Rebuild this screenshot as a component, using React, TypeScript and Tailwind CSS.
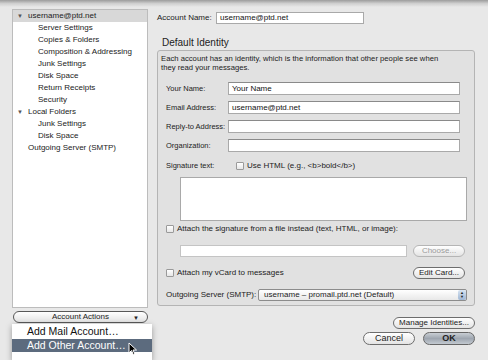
import React from 'react'

const font = { fontFamily: '"Liberation Sans", Arial, sans-serif' }

function TreeRow({ label, level, open, selected }: { label: string; level: number; open?: boolean; selected?: boolean }) {
  return (
    <div className={`flex h-[12px] items-center whitespace-nowrap text-[8px] leading-none text-[#222] ${selected ? 'bg-[#d8d8d8]' : ''}`}>
      <span className="w-[15px] shrink-0 pl-[4px] text-[6px] text-[#555]">{open ? '▼' : ''}</span>
      <span className={level === 1 ? 'pl-[10px]' : ''}>{label}</span>
    </div>
  )
}

function Field({ label, value }: { label: string; value?: string }) {
  return (
    <div className="flex h-[13px] items-center">
      <span className="w-[70px] shrink-0 whitespace-nowrap pl-[8px] text-[7.5px] text-[#222]">{label}</span>
      <div className="flex h-[13px] w-[232px] items-center border border-[#a9a9a9] border-t-[#8a8a8a] bg-white pl-[3px] text-[8px] text-[#111]">
        {value}
      </div>
    </div>
  )
}

function Check() {
  return <span className="inline-block h-[8px] w-[8px] shrink-0 rounded-[1px] border border-[#9a9a9a] bg-gradient-to-b from-white to-[#e6e6e6]" />
}

function Pill({ children, className = '' }: { children: React.ReactNode; className?: string }) {
  return (
    <div className={`flex items-center justify-center whitespace-nowrap rounded-full border border-[#6d6d6d] bg-gradient-to-b from-white to-[#e4e4e4] text-[8px] text-[#222] ${className}`}>
      {children}
    </div>
  )
}

export default function App() {
  return (
    <div className="relative h-[360px] w-[488px] overflow-hidden bg-[#e8e8e8]" style={font}>
      <div className="h-[7px] bg-gradient-to-b from-[#9c9c9c] via-[#cfcfcf] to-[#e8e8e8]" />
      <div className="flex">
        {/* left column */}
        <div className="w-[157px] shrink-0 pl-[12px] pt-[2px]">
          <div className="h-[299px] w-[136px] border border-[#bcbcbc] bg-white">
            <TreeRow label="username@ptd.net" level={0} open selected />
            <TreeRow label="Server Settings" level={1} />
            <TreeRow label="Copies & Folders" level={1} />
            <TreeRow label="Composition & Addressing" level={1} />
            <TreeRow label="Junk Settings" level={1} />
            <TreeRow label="Disk Space" level={1} />
            <TreeRow label="Return Receipts" level={1} />
            <TreeRow label="Security" level={1} />
            <TreeRow label="Local Folders" level={0} open />
            <TreeRow label="Junk Settings" level={1} />
            <TreeRow label="Disk Space" level={1} />
            <TreeRow label="Outgoing Server (SMTP)" level={0} />
          </div>
          <div className="relative ml-[1px] mt-[3px] flex h-[12px] w-[135px] items-center justify-center rounded-full border-[1.5px] border-[#585858] bg-gradient-to-b from-white to-[#e2e2e2] text-[8px] text-[#222]">
            Account Actions
            <span className="absolute right-[8px] top-[2px] text-[6px]">▼</span>
          </div>
        </div>

        {/* right column */}
        <div className="w-[318px] shrink-0">
          <div className="mt-[5px] flex h-[12px] items-center">
            <span className="w-[59px] whitespace-nowrap text-[8px] text-[#222]">Account Name:</span>
            <div className="flex h-[12px] w-[148px] items-center border border-[#a9a9a9] bg-white pl-[3px] text-[8px] text-[#111]">
              username@ptd.net
            </div>
          </div>
          <div className="mt-[13px] pl-[5px] text-[10px] leading-[12px] text-[#222]">Default Identity</div>
          <div className="mt-[1px] h-[256px] rounded-[3px] border border-[#b4b4b4] bg-[#e1e1e1]">
            <div className="whitespace-nowrap pl-[3px] pt-[3px] text-[7.7px] leading-[9px] text-[#222]">
              Each account has an identity, which is the information that other people see when
              <br />
              they read your messages.
            </div>
            <div className="mt-[10px] flex flex-col gap-[6px]">
              <Field label="Your Name:" value="Your Name" />
              <Field label="Email Address:" value="username@ptd.net" />
              <Field label="Reply-to Address:" />
              <Field label="Organization:" />
            </div>
            <div className="mt-[10px] flex h-[8px] items-center">
              <span className="w-[78px] shrink-0 whitespace-nowrap pl-[8px] text-[7.5px] text-[#222]">Signature text:</span>
              <Check />
              <span className="whitespace-nowrap pl-[3px] text-[8px] text-[#222]">Use HTML (e.g., &lt;b&gt;bold&lt;/b&gt;)</span>
            </div>
            <div className="ml-[22px] mt-[7px] h-[44px] w-[287px] border border-[#a9a9a9] bg-white" />
            <div className="mt-[4px] flex h-[8px] items-center pl-[8px]">
              <Check />
              <span className="whitespace-nowrap pl-[3px] text-[8px] text-[#222]">Attach the signature from a file instead (text, HTML, or image):</span>
            </div>
            <div className="mt-[12px] flex h-[12px] items-center">
              <div className="ml-[22px] h-[12px] w-[227px] border border-[#c4c4c4] bg-white" />
              <Pill className="ml-[6px] h-[12px] w-[52px] border-[#b5b5b5] !text-[#9a9a9a]">Choose...</Pill>
            </div>
            <div className="mt-[10px] flex h-[12px] items-center pl-[8px]">
              <Check />
              <span className="whitespace-nowrap pl-[3px] text-[8px] text-[#222]">Attach my vCard to messages</span>
              <Pill className="ml-auto mr-[9px] h-[12px] w-[52px]">Edit Card...</Pill>
            </div>
            <div className="mt-[10px] flex h-[12px] items-center">
              <span className="w-[100px] shrink-0 whitespace-nowrap pl-[8px] text-[8px] text-[#222]">Outgoing Server (SMTP):</span>
              <div className="flex h-[12px] w-[209px] items-center whitespace-nowrap rounded-[2px] border border-[#8c8c8c] bg-gradient-to-b from-white to-[#e8e8e8] pl-[5px] text-[8px] text-[#222]">
                username – promail.ptd.net (Default)
                <span className="ml-auto flex h-[10px] w-[8px] flex-col items-center justify-center rounded-[2px] bg-gradient-to-b from-[#d8e4f2] to-[#9fb6d3] text-[4px] leading-[4px] text-[#222]">
                  <span>▲</span>
                  <span>▼</span>
                </span>
              </div>
            </div>
          </div>
          <div className="mt-[11px] flex justify-end">
            <Pill className="h-[12px] w-[82px]">Manage Identities...</Pill>
          </div>
          <div className="mt-[3px] flex justify-end gap-[8px]">
            <Pill className="h-[13px] w-[52px] text-[9px]">Cancel</Pill>
            <div className="flex h-[13px] w-[52px] items-center justify-center rounded-full border border-[#666] bg-gradient-to-b from-[#c9ced4] via-[#9ea6b0] to-[#c3c9d0] text-[9px] font-bold text-[#222]">
              OK
            </div>
          </div>
        </div>
      </div>

      {/* popup menu of Account Actions */}
      <div className="absolute left-[12px] top-[324px] w-[140px] bg-white pb-[8px] shadow-[0_2px_6px_rgba(0,0,0,0.35)]">
        <div className="flex h-[15px] items-center pl-[15px] text-[10.5px] text-[#111]">Add Mail Account…</div>
        <div className="flex h-[13px] items-center bg-[#5c6b7e] pl-[15px] text-[10.5px] text-white">Add Other Account…</div>
      </div>
      <svg className="absolute left-[128px] top-[342px]" width="10" height="14" viewBox="0 0 10 14">
        <path d="M1 1 L1 11 L3.5 8.5 L5.5 13 L7 12.3 L5 8 L8.5 8 Z" fill="#000" stroke="#fff" strokeWidth="1" />
      </svg>
    </div>
  )
}
